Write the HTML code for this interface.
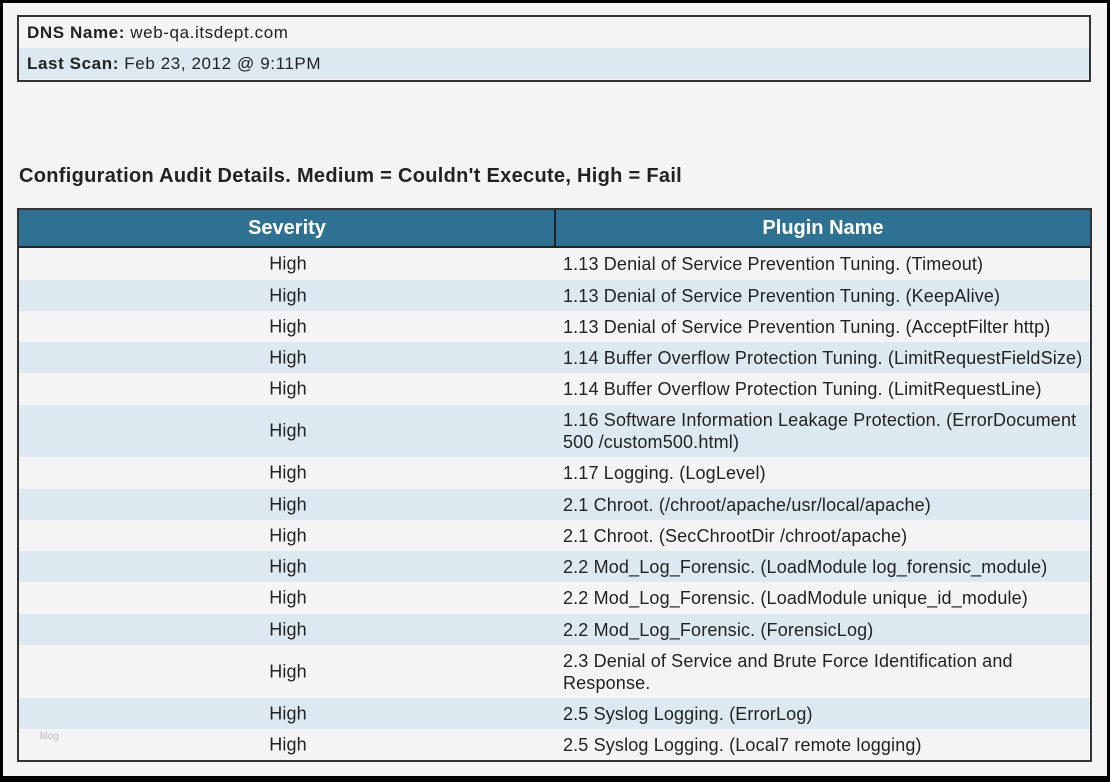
<!DOCTYPE html>
<html><head><style>
body{margin:0;width:1110px;height:782px;overflow:hidden;background:#f4f4f4;font-family:"Liberation Sans",sans-serif;color:#222;}
.outer{position:absolute;left:0;top:0;width:1104px;height:773px;border:3px solid #000;border-bottom-width:6px;background:#f4f4f4;}
.info{position:absolute;left:17px;top:15px;width:1070px;height:63px;border:2px solid #333;background:#f4f4f4;}
.info div{height:31px;line-height:32px;padding-left:8px;font-size:17px;letter-spacing:0.6px;}
.info .b{background:#dde9f0;}
h2{position:absolute;left:19px;top:165px;margin:0;font-size:20px;letter-spacing:0.3px;font-weight:bold;color:#222;}
.tbl{position:absolute;left:17px;top:208px;width:1071px;height:550px;border:2px solid #333;}
.hd{position:absolute;left:0;top:0;width:1071px;height:36px;background:#2f7192;border-bottom:2px solid #222;color:#fff;font-weight:bold;font-size:20px;}
.hd span{position:absolute;top:0;line-height:36px;text-align:center;}
.sep{position:absolute;left:535px;top:0;width:2px;height:36px;background:#222;}
.r{position:absolute;left:0;width:1071px;font-size:18px;letter-spacing:0.15px;}
.r.b{background:#dde9f0;}
.r .s{position:absolute;left:0;width:538px;text-align:center;top:50%;transform:translateY(-50%);}
.r .p{position:absolute;left:544px;width:525px;top:50%;transform:translateY(-50%);line-height:22px;}
.blog{position:absolute;left:40px;top:731px;font-size:10px;color:#bbb;}
</style></head><body>
<div class="outer"></div>
<div class="info"><div><b>DNS Name:</b> web-qa.itsdept.com</div><div class="b"><b>Last Scan:</b> Feb 23, 2012 @ 9:11PM</div></div>
<h2>Configuration Audit Details. Medium = Couldn't Execute, High = Fail</h2>
<div class="tbl">
<div class="hd"><span style="left:0;width:536px">Severity</span><div class="sep"></div><span style="left:537px;width:534px">Plugin Name</span></div>
<div class="r" style="top:38px;height:32px"><span class="s">High</span><span class="p">1.13 Denial of Service Prevention Tuning. (Timeout)</span></div>
<div class="r b" style="top:70px;height:31px"><span class="s">High</span><span class="p">1.13 Denial of Service Prevention Tuning. (KeepAlive)</span></div>
<div class="r" style="top:101px;height:31px"><span class="s">High</span><span class="p">1.13 Denial of Service Prevention Tuning. (AcceptFilter http)</span></div>
<div class="r b" style="top:132px;height:31px"><span class="s">High</span><span class="p">1.14 Buffer Overflow Protection Tuning. (LimitRequestFieldSize)</span></div>
<div class="r" style="top:163px;height:32px"><span class="s">High</span><span class="p">1.14 Buffer Overflow Protection Tuning. (LimitRequestLine)</span></div>
<div class="r b" style="top:195px;height:52px"><span class="s">High</span><span class="p">1.16 Software Information Leakage Protection. (ErrorDocument<br>500 /custom500.html)</span></div>
<div class="r" style="top:247px;height:32px"><span class="s">High</span><span class="p">1.17 Logging. (LogLevel)</span></div>
<div class="r b" style="top:279px;height:31px"><span class="s">High</span><span class="p">2.1 Chroot. (/chroot/apache/usr/local/apache)</span></div>
<div class="r" style="top:310px;height:31px"><span class="s">High</span><span class="p">2.1 Chroot. (SecChrootDir /chroot/apache)</span></div>
<div class="r b" style="top:341px;height:31px"><span class="s">High</span><span class="p">2.2 Mod_Log_Forensic. (LoadModule log_forensic_module)</span></div>
<div class="r" style="top:372px;height:32px"><span class="s">High</span><span class="p">2.2 Mod_Log_Forensic. (LoadModule unique_id_module)</span></div>
<div class="r b" style="top:404px;height:31px"><span class="s">High</span><span class="p">2.2 Mod_Log_Forensic. (ForensicLog)</span></div>
<div class="r" style="top:435px;height:53px"><span class="s">High</span><span class="p">2.3 Denial of Service and Brute Force Identification and<br>Response.</span></div>
<div class="r b" style="top:488px;height:31px"><span class="s">High</span><span class="p">2.5 Syslog Logging. (ErrorLog)</span></div>
<div class="r" style="top:519px;height:31px"><span class="s">High</span><span class="p">2.5 Syslog Logging. (Local7 remote logging)</span></div>
</div>
<div class="blog">blog</div>
</body></html>
